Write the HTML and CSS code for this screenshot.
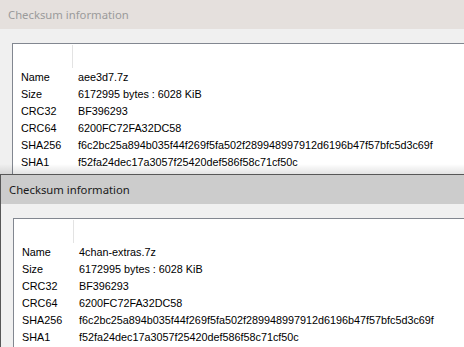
FILE: index.html
```html
<!DOCTYPE html>
<html>
<head>
<meta charset="utf-8">
<link rel="stylesheet" href="styles.css">
</head>
<body>
<div class="desk">
  <div class="win win-back">
    <div class="frame">
      <div class="title">Checksum information</div>
      <div class="body">
        <div class="list">
          <div class="head"><div class="hc1"></div><div class="hc2"></div></div>
          <div class="row"><div class="k">Name</div><div class="v">aee3d7.7z</div></div>
          <div class="row"><div class="k">Size</div><div class="v">6172995 bytes : 6028 KiB</div></div>
          <div class="row"><div class="k">CRC32</div><div class="v">BF396293</div></div>
          <div class="row"><div class="k">CRC64</div><div class="v">6200FC72FA32DC58</div></div>
          <div class="row"><div class="k">SHA256</div><div class="v">f6c2bc25a894b035f44f269f5fa502f289948997912d6196b47f57bfc5d3c69f</div></div>
          <div class="row"><div class="k">SHA1</div><div class="v">f52fa24dec17a3057f25420def586f58c71cf50c</div></div>
        </div>
      </div>
    </div>
  </div>
  <div class="win win-front">
    <div class="frame">
      <div class="title">Checksum information</div>
      <div class="body">
        <div class="list">
          <div class="head"><div class="hc1"></div><div class="hc2"></div></div>
          <div class="row"><div class="k">Name</div><div class="v">4chan-extras.7z</div></div>
          <div class="row"><div class="k">Size</div><div class="v">6172995 bytes : 6028 KiB</div></div>
          <div class="row"><div class="k">CRC32</div><div class="v">BF396293</div></div>
          <div class="row"><div class="k">CRC64</div><div class="v">6200FC72FA32DC58</div></div>
          <div class="row"><div class="k">SHA256</div><div class="v">f6c2bc25a894b035f44f269f5fa502f289948997912d6196b47f57bfc5d3c69f</div></div>
          <div class="row"><div class="k">SHA1</div><div class="v">f52fa24dec17a3057f25420def586f58c71cf50c</div></div>
        </div>
      </div>
    </div>
  </div>
</div>
</body>
</html>
```
FILE: styles.css
```css
html, body {
  margin: 0;
  padding: 0;
  background: #f0f0f0;
  overflow: hidden;
}
.desk {
  width: 464px;
  height: 347px;
  overflow: hidden;
  display: flex;
  flex-direction: column;
}
.win {
  overflow: hidden;
  position: relative;
  flex: none;
}
.win-back {
  height: 174px;
}
.win-back .frame {
  margin-top: -1px;
  margin-left: -1px;
  border: 1px solid #9a9a9a;
}
.win-back::after {
  content: "";
  position: absolute;
  left: 0;
  right: 0;
  bottom: 0;
  height: 10px;
  background: linear-gradient(rgba(0,0,0,0), rgba(0,0,0,0.11));
}
.win-back .title {
  background: #e5e0dd;
  color: #9b9b9b;
}
.win-front {
  height: 173px;
}
.win-front .frame {
  border-top: 1px solid #575757;
  border-left: 1px solid #575757;
}
.win-front .title {
  background: #cccccc;
  color: #1a1a1a;
}
.frame {
  background: #f0f0f0;
  width: 520px;
  height: 400px;
  border-right: none;
}
.title {
  height: 29px;
  line-height: 29px;
  padding-left: 8px;
  font-family: "Noto Sans", "Open Sans", sans-serif;
  font-size: 11.3px;
}
.body {
  padding: 14px 0 0 12px;
}
.list {
  background: #ffffff;
  border: 1px solid #828790;
  border-right: none;
  height: 300px;
  font-family: "Liberation Sans", Arial, sans-serif;
  font-size: 10.8px;
  color: #000;
}
.head {
  display: grid;
  grid-template-columns: 59px 1fr;
  height: 25px;
}
.hc2 {
  border-left: 1px solid #e3e3e3;
  margin: 1px 0;
}
.row {
  display: grid;
  grid-template-columns: 59px 1fr;
  height: 17px;
  line-height: 17px;
  white-space: nowrap;
}
.k {
  padding-left: 8px;
}
.v {
  padding-left: 6px;
}
```
